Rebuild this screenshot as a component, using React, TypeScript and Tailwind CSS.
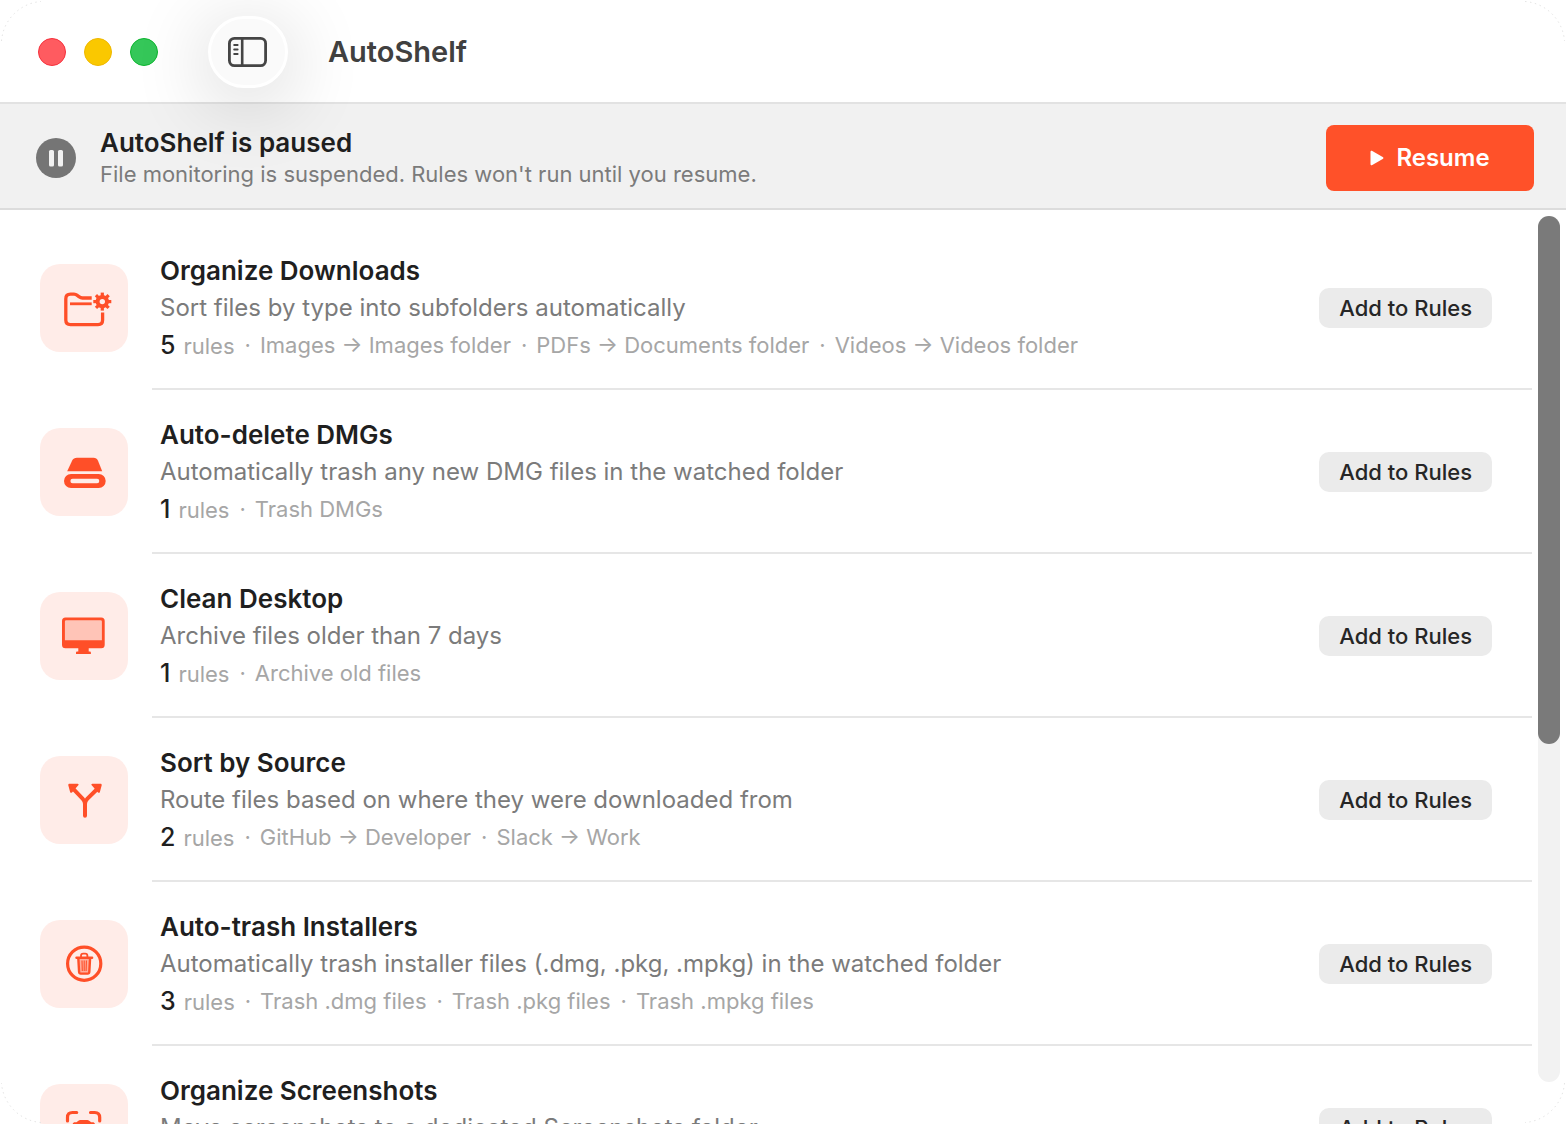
import type { ReactNode } from "react";

const ACCENT = "#ff4f28";

function FolderGearIcon() {
  const teeth = [0, 45, 90, 135, 180, 225, 270, 315];
  return (
    <svg viewBox="0 0 88 88" className="size-full" fill="none" stroke={ACCENT} strokeWidth="3.300" strokeLinecap="butt" aria-hidden="true">
      <path d="M51.700 34H42.500c-1.600 0-2.400-.5-3.600-1.400l-1.600-1.200c-1-.8-1.900-1.200-3.300-1.200H30.500c-3 0-4.700 1.700-4.700 4.700V56c0 3 1.700 4.600 4.700 4.600H58c3 0 4.600-1.700 4.600-4.600V48.500" />
      <path d="M30 39.800h21.700" strokeWidth="2.800" />
      <circle cx="62.300" cy="37.600" r="4.700" strokeWidth="4" />
      {teeth.map((a) => (
        <path key={a} d="M62.300 32V28.600" strokeWidth="3.200" transform={`rotate(${a} 62.3 37.6)`} />
      ))}
    </svg>
  );
}

function DriveIcon() {
  return (
    <svg viewBox="0 0 88 88" className="size-full" fill={ACCENT} aria-hidden="true">
      <path d="M37 29.700h16.500c2.200 0 3.500.8 4.400 2.700l4.300 10.900H27.200l5-10.900c.9-1.900 2.500-2.700 4.800-2.700z" />
      <path fillRule="evenodd" d="M31 46h27.700a7 7 0 0 1 0 14H31a7 7 0 0 1 0-14zm1.600 4.800a2.200 2.200 0 0 0 0 4.400h24.500a2.200 2.200 0 0 0 0-4.400z" />
    </svg>
  );
}

function DesktopIcon() {
  return (
    <svg viewBox="0 0 88 88" className="size-full" fill={ACCENT} aria-hidden="true">
      <rect x="23.500" y="27" width="40" height="24" rx="2" fill="#ffc4b7" />
      <path fillRule="evenodd" d="M25.500 25.500h35.700a3.500 3.500 0 0 1 3.500 3.500v23.700a3.500 3.500 0 0 1-3.500 3.500H25.500a3.500 3.500 0 0 1-3.500-3.500V29a3.500 3.500 0 0 1 3.500-3.500zm.7 2.800a1.300 1.300 0 0 0-1.300 1.300V48.200h37V29.600a1.300 1.300 0 0 0-1.300-1.300z" />
      <path d="M38.300 55h10.400v4.500h1c.7 0 1.200.5 1.200 1.200v1.400H36v-1.400c0-.7.500-1.200 1.200-1.200h1.100z" />
    </svg>
  );
}

function BranchIcon() {
  return (
    <svg viewBox="0 0 88 88" className="size-full" aria-hidden="true">
      <path d="M45 59.800V48c0-2.300-.6-3.600-2.200-5.200L33.500 33.200M45 48c0-2.300.6-3.600 2.200-5.200l9.800-9.600" fill="none" stroke={ACCENT} strokeWidth="4" strokeLinecap="round" />
      <path d="M28.300 29.200c-.2-.9.300-1.500 1.300-1.500h8c1 0 1.300.8.700 1.500l-6.300 7.200c-.7.700-1.600.6-1.900-.4zM61.700 29.200c.2-.9-.3-1.500-1.300-1.500h-8c-1 0-1.300.8-.7 1.500l6.300 7.200c.7.700 1.600.6 1.900-.4z" fill={ACCENT} />
    </svg>
  );
}

function TrashCircleIcon() {
  return (
    <svg viewBox="0 0 88 88" className="size-full" fill="none" stroke={ACCENT} aria-hidden="true">
      <circle cx="44.200" cy="43.700" r="16.600" strokeWidth="3.200" />
      <path d="M36.500 37.800h15.600" strokeWidth="2.400" strokeLinecap="round" />
      <path d="M41 37.500v-1.700c0-1.400.8-2.200 2.200-2.200h2c1.400 0 2.200.8 2.200 2.200v1.700" strokeWidth="1.800" />
      <path d="M38.300 38l.8 14c.1 1 .7 1.600 1.700 1.600h6.800c1 0 1.600-.6 1.700-1.600l.8-14" strokeWidth="2.400" fill="#ff4f2866" />
      <path d="M42 40.500l.3 10.500M44.200 40.500V51M46.400 40.500L46.100 51" strokeWidth="1.100" />
    </svg>
  );
}

function ViewfinderIcon() {
  return (
    <svg viewBox="0 0 88 88" className="size-full" fill="none" stroke={ACCENT} strokeWidth="3.200" strokeLinecap="round" aria-hidden="true">
      <path d="M27.500 37v-3.500c0-3.400 1.700-5 5-5h4.200M50.500 28.500h4.200c3.400 0 5 1.600 5 5V37M59.700 52v3.500c0 3.400-1.600 5-5 5h-4.200M36.700 60.500h-4.200c-3.300 0-5-1.600-5-5V52" />
      <path d="M35 38.300h1.400l2-1.600c.6-.5 1.100-.7 1.900-.7h7c.8 0 1.300.2 1.900.7l2 1.600h1.400c1.500 0 2.400.9 2.400 2.400v9.200c0 1.500-.9 2.400-2.400 2.400H35c-1.500 0-2.400-.9-2.400-2.400v-9.200c0-1.500.9-2.400 2.400-2.400z" fill={ACCENT} stroke="none" />
      <circle cx="43.800" cy="45" r="3.500" stroke="#ffece8" strokeWidth="1.600" />
    </svg>
  );
}

function SidebarIcon() {
  return (
    <svg viewBox="0 0 40 32" className="h-8 w-10" fill="none" stroke="#454545" strokeWidth="2.800" aria-hidden="true">
      <rect x="1.400" y="2.400" width="36.200" height="27.200" rx="5" />
      <path d="M14.200 2.500v27" strokeWidth="2.600" />
      <path d="M6.200 9h3.400M6.200 13.500h3.400M6.200 18h3.400" strokeWidth="2" strokeLinecap="round" />
    </svg>
  );
}

function PauseIcon() {
  return (
    <svg viewBox="0 0 40 40" className="size-10 shrink-0" aria-hidden="true">
      <circle cx="20" cy="20" r="20" fill="#757575" />
      <rect x="13" y="12" width="5" height="16.500" rx="1.600" fill="#f1f1f1" />
      <rect x="22" y="12" width="5" height="16.500" rx="1.600" fill="#f1f1f1" />
    </svg>
  );
}

function CornerArc({ className }: { className: string }) {
  return (
    <svg viewBox="0 0 44 44" className={`pointer-events-none absolute size-11 ${className}`} aria-hidden="true">
      <path d="M1.500 41C3 20 20 3 41 1.500" fill="none" stroke="#e4e4e4" strokeWidth="1" strokeDasharray="1.500 3.500" />
    </svg>
  );
}

type Template = { title: string; text: string; count: number; rules: string[]; icon: ReactNode };

const templates: Template[] = [
  {
    title: "Organize Downloads",
    text: "Sort files by type into subfolders automatically",
    count: 5,
    rules: ["Images → Images folder", "PDFs → Documents folder", "Videos → Videos folder"],
    icon: <FolderGearIcon />,
  },
  {
    title: "Auto-delete DMGs",
    text: "Automatically trash any new DMG files in the watched folder",
    count: 1,
    rules: ["Trash DMGs"],
    icon: <DriveIcon />,
  },
  {
    title: "Clean Desktop",
    text: "Archive files older than 7 days",
    count: 1,
    rules: ["Archive old files"],
    icon: <DesktopIcon />,
  },
  {
    title: "Sort by Source",
    text: "Route files based on where they were downloaded from",
    count: 2,
    rules: ["GitHub → Developer", "Slack → Work"],
    icon: <BranchIcon />,
  },
  {
    title: "Auto-trash Installers",
    text: "Automatically trash installer files (.dmg, .pkg, .mpkg) in the watched folder",
    count: 3,
    rules: ["Trash .dmg files", "Trash .pkg files", "Trash .mpkg files"],
    icon: <TrashCircleIcon />,
  },
  {
    title: "Organize Screenshots",
    text: "Move screenshots to a dedicated Screenshots folder",
    count: 1,
    rules: ["Screenshots → Screenshots folder"],
    icon: <ViewfinderIcon />,
  },
];

function TemplateRow({ title, text, count, rules, icon }: Template) {
  return (
    <li className="flex pl-10">
      <div className="flex h-[164px] shrink-0 items-center pr-6">
        <div className="size-[88px] rounded-[20px] bg-[#ffece8]">{icon}</div>
      </div>
      <div className="flex h-[164px] min-w-0 flex-1 items-center justify-between border-b-2 border-[#e6e6e6] pt-0.5 pr-10 pl-2">
        <div className="flex min-w-0 flex-col gap-[5px] whitespace-nowrap">
          <h2 className="text-[26px] leading-8 font-semibold text-[#1f1f1f]">{title}</h2>
          <p className="text-[24px] leading-8 text-[#7b7b7b]">{text}</p>
          <div className="flex items-center gap-[10px] text-[22px] leading-8 text-[#a6a6a6]">
            <span className="flex items-baseline gap-2">
              <span className="text-[25px] font-medium text-[#1f1f1f]">{count}</span>
              <span>rules</span>
            </span>
            {rules.map((rule) => (
              <span key={rule} className="flex gap-[9px]">
                <span>·</span>
                <span>{rule}</span>
              </span>
            ))}
          </div>
        </div>
        <button type="button" className="h-10 shrink-0 rounded-[10px] bg-[#ebebeb] px-5 text-[22px] font-medium text-[#262626]">
          Add to Rules
        </button>
      </div>
    </li>
  );
}

function App() {
  return (
    <div className="relative flex h-screen flex-col overflow-hidden rounded-[44px] bg-white font-['Inter',sans-serif]">
      <header className="relative z-10 flex h-[102px] shrink-0 items-center pt-0.5 pl-[38px]">
        <div className="flex gap-[18px]">
          <button type="button" aria-label="Close" className="size-7 rounded-full border border-[#f5313c] bg-[#ff5b60]" />
          <button type="button" aria-label="Minimize" className="size-7 rounded-full border border-[#eeb700] bg-[#fac800]" />
          <button type="button" aria-label="Zoom" className="size-7 rounded-full border border-[#0db52f] bg-[#35c759]" />
        </div>
        <button
          type="button"
          aria-label="Toggle sidebar"
          className="ml-[50px] flex h-[72px] w-20 items-center justify-center rounded-full border-3 border-white bg-[#fafafa] shadow-[0_12px_80px_rgba(0,0,0,0.2)]"
        >
          <SidebarIcon />
        </button>
        <h1 className="ml-10 text-[29px] leading-9 font-semibold text-[#404040]">AutoShelf</h1>
      </header>

      <section className="flex h-[108px] shrink-0 items-center border-y-2 border-t-[#e2e2e2] border-b-[#dcdcdc] bg-[#f1f1f1] pt-[3px] pr-8 pl-9">
        <PauseIcon />
        <div className="ml-6 flex-1">
          <p className="text-[26px] leading-8 font-semibold text-[#1f1f1f]">AutoShelf is paused</p>
          <p className="text-[22px] leading-[30px] text-[#7b7b7b]">File monitoring is suspended. Rules won't run until you resume.</p>
        </div>
        <button type="button" className="flex h-[66px] w-52 items-center justify-center gap-3 rounded-lg bg-[#ff5129] text-[24px] font-semibold text-white">
          <svg viewBox="0 0 14 16" className="h-4 w-3.5" fill="currentColor" aria-hidden="true">
            <path d="M.5 2C.5.900 1.400.500 2.300 1l10.400 6c1 .6 1 1.500 0 2.100L2.300 15c-.9.5-1.800.1-1.800-1z" />
          </svg>
          Resume
        </button>
      </section>

      <main className="flex min-h-0 flex-1">
        <ul className="min-w-0 flex-1 overflow-y-auto pt-4 [scrollbar-width:none]">
          {templates.map((template) => (
            <TemplateRow key={template.title} {...template} />
          ))}
        </ul>
        <div className="flex shrink-0 px-1.5 pt-1.5 pb-[42px]">
          <div className="w-[22px] rounded-full bg-[#f2f2f2]">
            <div className="h-[61%] rounded-full bg-[#7a7a7a]" />
          </div>
        </div>
      </main>

      <CornerArc className="top-0 left-0" />
      <CornerArc className="top-0 right-0 rotate-90" />
      <CornerArc className="right-0 bottom-0 rotate-180" />
      <CornerArc className="bottom-0 left-0 -rotate-90" />
    </div>
  );
}

export default App;
